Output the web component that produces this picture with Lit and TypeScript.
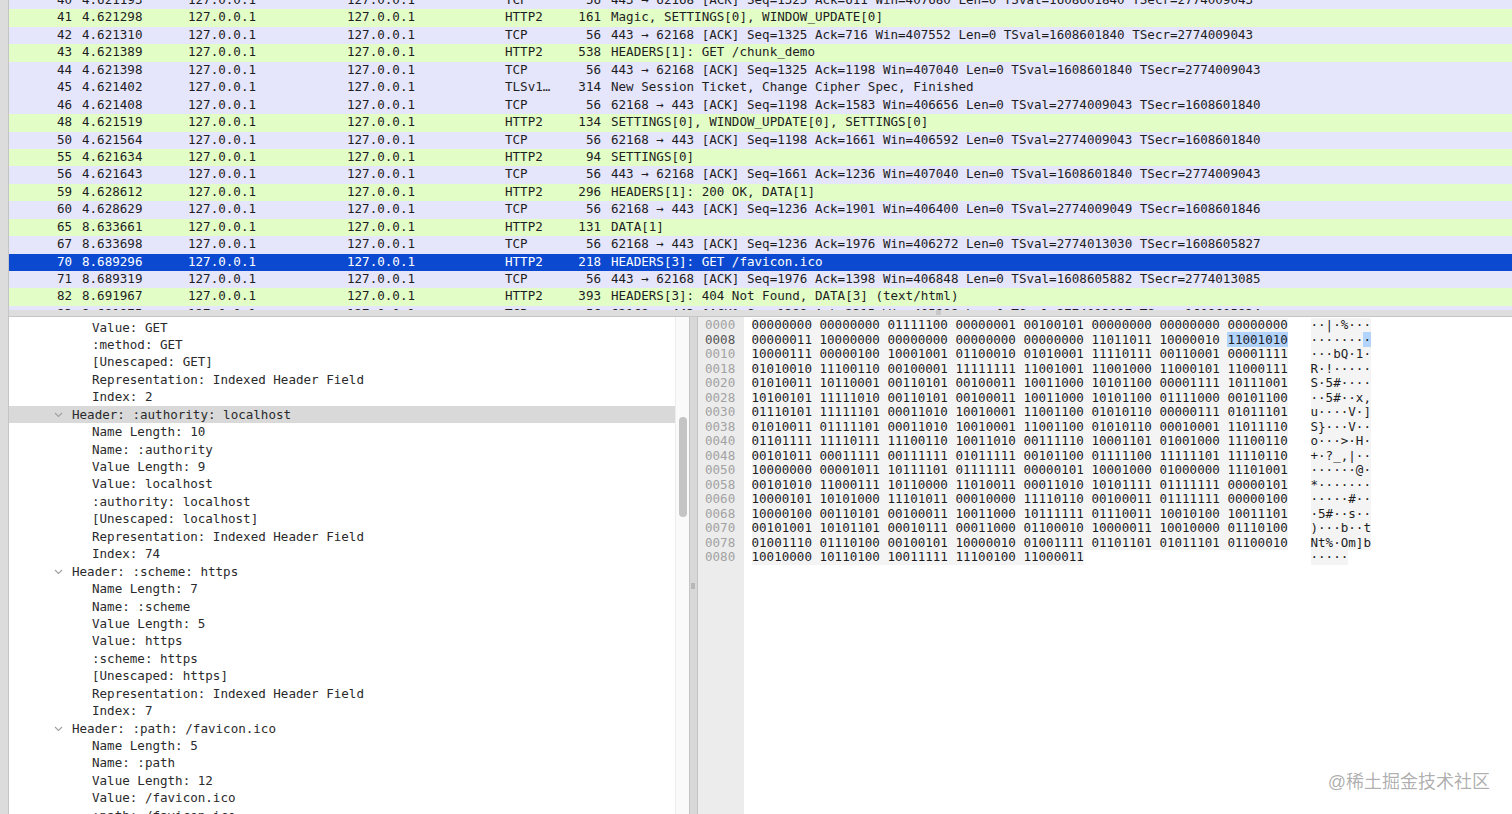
import { LitElement, html, css, svg } from 'lit';
import { customElement } from 'lit/decorators.js';

type Packet = [string, string, string, string, string];

const packets: Packet[] = [
  ['40', '4.621193', 'TCP', '56', '443 → 62168 [ACK] Seq=1325 Ack=611 Win=407680 Len=0 TSval=1608601840 TSecr=2774009043'],
  ['41', '4.621298', 'HTTP2', '161', 'Magic, SETTINGS[0], WINDOW_UPDATE[0]'],
  ['42', '4.621310', 'TCP', '56', '443 → 62168 [ACK] Seq=1325 Ack=716 Win=407552 Len=0 TSval=1608601840 TSecr=2774009043'],
  ['43', '4.621389', 'HTTP2', '538', 'HEADERS[1]: GET /chunk_demo'],
  ['44', '4.621398', 'TCP', '56', '443 → 62168 [ACK] Seq=1325 Ack=1198 Win=407040 Len=0 TSval=1608601840 TSecr=2774009043'],
  ['45', '4.621402', 'TLSv1…', '314', 'New Session Ticket, Change Cipher Spec, Finished'],
  ['46', '4.621408', 'TCP', '56', '62168 → 443 [ACK] Seq=1198 Ack=1583 Win=406656 Len=0 TSval=2774009043 TSecr=1608601840'],
  ['48', '4.621519', 'HTTP2', '134', 'SETTINGS[0], WINDOW_UPDATE[0], SETTINGS[0]'],
  ['50', '4.621564', 'TCP', '56', '62168 → 443 [ACK] Seq=1198 Ack=1661 Win=406592 Len=0 TSval=2774009043 TSecr=1608601840'],
  ['55', '4.621634', 'HTTP2', '94', 'SETTINGS[0]'],
  ['56', '4.621643', 'TCP', '56', '443 → 62168 [ACK] Seq=1661 Ack=1236 Win=407040 Len=0 TSval=1608601840 TSecr=2774009043'],
  ['59', '4.628612', 'HTTP2', '296', 'HEADERS[1]: 200 OK, DATA[1]'],
  ['60', '4.628629', 'TCP', '56', '62168 → 443 [ACK] Seq=1236 Ack=1901 Win=406400 Len=0 TSval=2774009049 TSecr=1608601846'],
  ['65', '8.633661', 'HTTP2', '131', 'DATA[1]'],
  ['67', '8.633698', 'TCP', '56', '62168 → 443 [ACK] Seq=1236 Ack=1976 Win=406272 Len=0 TSval=2774013030 TSecr=1608605827'],
  ['70', '8.689296', 'HTTP2', '218', 'HEADERS[3]: GET /favicon.ico'],
  ['71', '8.689319', 'TCP', '56', '443 → 62168 [ACK] Seq=1976 Ack=1398 Win=406848 Len=0 TSval=1608605882 TSecr=2774013085'],
  ['82', '8.691967', 'HTTP2', '393', 'HEADERS[3]: 404 Not Found, DATA[3] (text/html)'],
  ['83', '8.691975', 'TCP', '56', '62168 → 443 [ACK] Seq=1398 Ack=2315 Win=405888 Len=0 TSval=2774013087 TSecr=1608605934'],
];

// h = header row with a chevron, s = the selected one
const tree: [string, string?][] = [
  ['Value: GET'],
  [':method: GET'],
  ['[Unescaped: GET]'],
  ['Representation: Indexed Header Field'],
  ['Index: 2'],
  ['Header: :authority: localhost', 's'],
  ['Name Length: 10'],
  ['Name: :authority'],
  ['Value Length: 9'],
  ['Value: localhost'],
  [':authority: localhost'],
  ['[Unescaped: localhost]'],
  ['Representation: Indexed Header Field'],
  ['Index: 74'],
  ['Header: :scheme: https', 'h'],
  ['Name Length: 7'],
  ['Name: :scheme'],
  ['Value Length: 5'],
  ['Value: https'],
  [':scheme: https'],
  ['[Unescaped: https]'],
  ['Representation: Indexed Header Field'],
  ['Index: 7'],
  ['Header: :path: /favicon.ico', 'h'],
  ['Name Length: 5'],
  ['Name: :path'],
  ['Value Length: 12'],
  ['Value: /favicon.ico'],
  [':path: /favicon.ico'],
];

const dump: [string, string, string][] = [
  ['0000', '00000000 00000000 01111100 00000001 00100101 00000000 00000000 00000000', '··|·%···'],
  ['0008', '00000011 10000000 00000000 00000000 00000000 11011011 10000010 11001010', '········'],
  ['0010', '10000111 00000100 10001001 01100010 01010001 11110111 00110001 00001111', '···bQ·1·'],
  ['0018', '01010010 11100110 00100001 11111111 11001001 11001000 11000101 11000111', 'R·!·····'],
  ['0020', '01010011 10110001 00110101 00100011 10011000 10101100 00001111 10111001', 'S·5#····'],
  ['0028', '10100101 11111010 00110101 00100011 10011000 10101100 01111000 00101100', '··5#··x,'],
  ['0030', '01110101 11111101 00011010 10010001 11001100 01010110 00000111 01011101', 'u····V·]'],
  ['0038', '01010011 01111101 00011010 10010001 11001100 01010110 00010001 11011110', 'S}···V··'],
  ['0040', '01101111 11110111 11100110 10011010 00111110 10001101 01001000 11100110', 'o···>·H·'],
  ['0048', '00101011 00011111 00111111 01011111 00101100 01111100 11111101 11110110', '+·?_,|··'],
  ['0050', '10000000 00001011 10111101 01111111 00000101 10001000 01000000 11101001', '······@·'],
  ['0058', '00101010 11000111 10110000 11010011 00011010 10101111 01111111 00000101', '*·······'],
  ['0060', '10000101 10101000 11101011 00010000 11110110 00100011 01111111 00000100', '·····#··'],
  ['0068', '10000100 00110101 00100011 10011000 10111111 01110011 10010100 10011101', '·5#··s··'],
  ['0070', '00101001 10101101 00010111 00011000 01100010 10000011 10010000 01110100', ')···b··t'],
  ['0078', '01001110 01110100 00100101 10000010 01001111 01101101 01011101 01100010', 'Nt%·Om]b'],
  ['0080', '10010000 10110100 10011111 11100100 11000011', '·····'],
];

const chevron = svg`<polyline points="1,1 4.5,4.5 8,1" fill="none" stroke="#a0a0a0" stroke-width="1.1"></polyline>`;

@customElement('app-root')
export class AppRoot extends LitElement {
  static styles = css`
    :host {
      display: flex;
      height: 814px;
      overflow: hidden;
      background: #fff;
      color: #1d1d1f;
      font: 12.55px 'DejaVu Sans Mono', 'Liberation Mono', monospace;
      white-space: nowrap;
    }

    .gutter {
      width: 8px;
      flex: none;
      background: #dcdcdc;
      border-right: 1px solid #c4c4c4;
    }

    .main {
      flex: 1;
      min-width: 0;
      display: flex;
      flex-direction: column;
    }

    .packets {
      height: 310px;
      flex: none;
      overflow: hidden;
    }

    .packet-list {
      margin-top: -8px;
    }

    .packet {
      display: grid;
      grid-template-columns: 63px 116px 159px 158px 55px 41px 1fr;
      height: 17.44px;
      line-height: 16px;
      background: #e5e5fb;
    }

    .packet.http {
      background: #e3fdc6;
    }

    .packet.selected {
      background: #0b4ad0;
      color: #fff;
    }

    .right {
      text-align: right;
    }

    .pad {
      padding-left: 10px;
    }

    .split-h {
      height: 7px;
      flex: none;
      display: flex;
      padding-left: 927px;
      background: #dedede;
      border-bottom: 1px solid #c6c6c6;
      box-sizing: border-box;
    }

    .split-h i {
      width: 5px;
      height: 5px;
      background: #c8c8c8;
    }

    .panes {
      flex: 1;
      min-height: 0;
      display: flex;
    }

    .details {
      width: 666px;
      flex: none;
      overflow: hidden;
      padding-top: 1.5px;
    }

    .node {
      display: flex;
      height: 17.44px;
      line-height: 17.44px;
      padding-left: 83px;
      color: #2a2a2c;
    }

    .node.head {
      padding-left: 45px;
    }

    .node.sel {
      background: #d9d9d9;
    }

    .node svg {
      width: 9px;
      height: 6px;
      margin: 6px 9px 0 0;
    }

    .scroll {
      width: 13px;
      flex: none;
      background: #fafafa;
      border-left: 1px solid #ececec;
      display: flex;
      justify-content: center;
    }

    .thumb {
      width: 8px;
      height: 100px;
      margin-top: 100px;
      border-radius: 4px;
      background: #c4c4c4;
    }

    .split-v {
      width: 9px;
      flex: none;
      box-sizing: border-box;
      background: #d8d8d8;
      border-left: 1px solid #c4c4c4;
      border-right: 1px solid #c4c4c4;
      padding: 266px 0 0 1px;
    }

    .split-v i {
      display: block;
      width: 4px;
      height: 6px;
      background: #b8b8b8;
    }

    .hex {
      flex: 1;
      display: flex;
      min-width: 0;
    }

    .addrs {
      width: 46px;
      flex: none;
      box-sizing: border-box;
      padding: 1px 0 0 7px;
      background: #ececec;
      color: #a2a2a2;
    }

    .addrs div,
    .line {
      height: 14.5px;
      line-height: 14.5px;
    }

    .line {
      white-space: pre;
    }

    .addrs .cur {
      color: #555;
    }

    .dump {
      padding: 1px 0 0 7.5px;
    }

    .bytes,
    .ascii {
      background: #f4f4f4;
      display: inline-block;
      height: 14.5px;
    }

    .mark {
      background: #b2d3fb;
    }

    .watermark {
      position: absolute;
      right: 22px;
      top: 767px;
      font: 18px 'Liberation Sans', 'Noto Sans CJK SC', sans-serif;
      color: #00000055;
    }
  `;

  renderPacket(p: Packet) {
    const http = p[2] === 'HTTP2';
    const selected = p[0] === '70';
    return html`<div class="packet ${http ? 'http' : ''} ${selected ? 'selected' : ''}">
      <span class="right">${p[0]}</span><span class="pad">${p[1]}</span><span>127.0.0.1</span><span>127.0.0.1</span><span>${p[2]}</span><span class="right">${p[3]}</span><span class="pad">${p[4]}</span>
    </div>`;
  }

  renderNode([text, kind]: [string, string?]) {
    if (!kind) return html`<div class="node">${text}</div>`;
    return html`<div class="node head ${kind === 's' ? 'sel' : ''}">
      <svg viewBox="0 0 9 6">${chevron}</svg><span>${text}</span>
    </div>`;
  }

  renderLine([addr, bytes, ascii]: [string, string, string]) {
    if (addr === '0008') {
      return html`<div class="line"><span class="bytes">${bytes.slice(0, -8)}<span class="mark">${bytes.slice(-8)}</span></span>   <span class="ascii">${ascii.slice(0, -1)}<span class="mark">${ascii.slice(-1)}</span></span></div>`;
    }
    const gap = ' '.repeat(71 - bytes.length + 3);
    return html`<div class="line"><span class="bytes">${bytes}</span>${gap}<span class="ascii">${ascii}</span></div>`;
  }

  render() {
    return html`
      <div class="gutter"></div>
      <div class="main">
        <div class="packets">
          <div class="packet-list">${packets.map(p => this.renderPacket(p))}</div>
        </div>
        <div class="split-h"><i></i></div>
        <div class="panes">
          <div class="details">${tree.map(n => this.renderNode(n))}</div>
          <div class="scroll"><div class="thumb"></div></div>
          <div class="split-v"><i></i></div>
          <div class="hex">
            <div class="addrs">
              ${dump.map(d => html`<div class="${d[0] === '0008' ? 'cur' : ''}">${d[0]}</div>`)}
            </div>
            <div class="dump">${dump.map(d => this.renderLine(d))}</div>
          </div>
        </div>
      </div>
      <div class="watermark">@稀土掘金技术社区</div>
    `;
  }
}
